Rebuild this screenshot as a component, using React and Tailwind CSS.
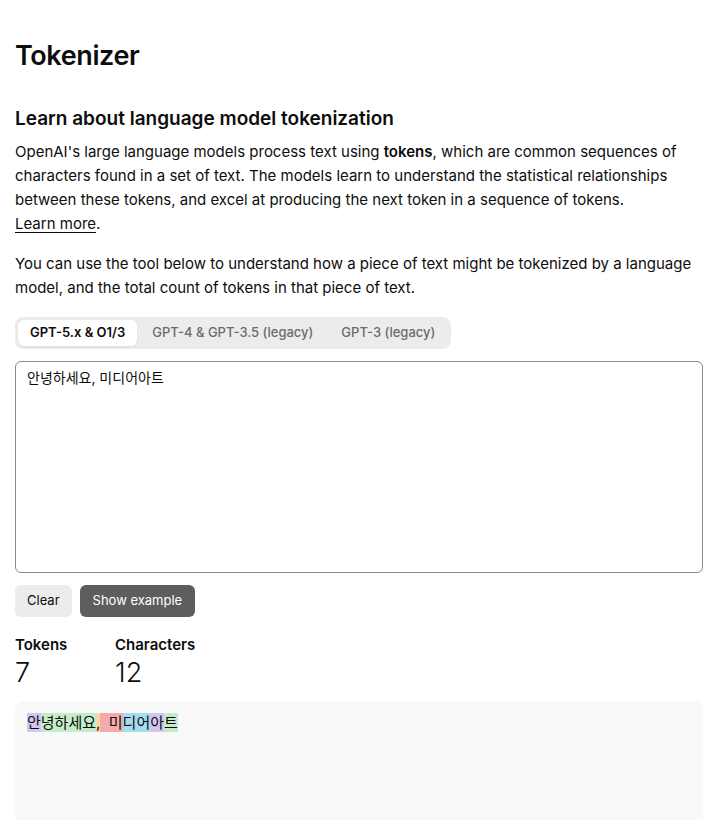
const tokens = [
  { text: '안', color: 'bg-[#d2c6f0]' },
  { text: '녕하세요', color: 'bg-[#c4ecc8]' },
  { text: ',', color: 'bg-[#f6d9a8]' },
  { text: ' \u00a0미', color: 'bg-[#f4abab]' },
  { text: '디어', color: 'bg-[#a4dcf2]' },
  { text: '아', color: 'bg-[#d2c6f0]' },
  { text: '트', color: 'bg-[#c4ecc8]' },
]

export default function App() {
  return (
    <div className="min-h-screen bg-white text-[#0d0d0d] font-['Inter','Noto_Sans_CJK_KR',sans-serif] pl-[15px] pr-[13px] pt-[36px] overflow-hidden">
      <h1 className="text-[27px] leading-[40px] font-semibold tracking-[-0.4px]">Tokenizer</h1>

      <h2 className="mt-[29px] text-[19px] leading-[28px] font-semibold">Learn about language model tokenization</h2>

      <p className="mt-[7px] text-[15px] leading-[24px]">
        OpenAI's large language models process text using <b className="font-semibold">tokens</b>, which are common sequences of characters found in a set of text. The models learn to understand the statistical relationships between these tokens, and excel at producing the next token in a sequence of tokens.
        <br />
        <a href="#" className="underline underline-offset-[3px] decoration-1">Learn more</a>.
      </p>

      <p className="mt-[16px] text-[15px] leading-[24px]">
        You can use the tool below to understand how a piece of text might be tokenized by a language model, and the total count of tokens in that piece of text.
      </p>

      {/* Model tabs */}
      <div className="mt-[17px] flex">
        <div className="flex items-center gap-[2px] rounded-lg bg-[#ececec] p-[3px] text-[13px] font-medium">
          <button className="rounded-md bg-white px-[12px] h-[26px] text-[#0d0d0d] font-semibold shadow-[0_1px_2px_rgba(0,0,0,0.08)]">GPT-5.x &amp; O1/3</button>
          <button className="rounded-md px-[13px] h-[26px] text-[#6b6b6b]">GPT-4 &amp; GPT-3.5 (legacy)</button>
          <button className="rounded-md px-[13px] h-[26px] text-[#6b6b6b]">GPT-3 (legacy)</button>
        </div>
      </div>

      <textarea
        defaultValue="안녕하세요, 미디어아트"
        className="mt-[12px] block w-full h-[212px] resize-none rounded-[6px] border border-[#8a8a8a] px-[11px] py-[6px] text-[14px] leading-[20px] text-[#0d0d0d] outline-none"
      />

      <div className="mt-[12px] flex gap-[8px] text-[13px]">
        <button className="h-[32px] rounded-md bg-[#ececec] px-[12px] text-[#0d0d0d]">Clear</button>
        <button className="h-[32px] rounded-md bg-[#5d5d5d] px-[13px] text-white">Show example</button>
      </div>

      <div className="mt-[18px] flex gap-[48px]">
        <div className="w-[52px]">
          <div className="text-[15px] leading-[20px] font-semibold">Tokens</div>
          <div className="text-[27px] leading-[36px] font-light">7</div>
        </div>
        <div>
          <div className="text-[15px] leading-[20px] font-semibold">Characters</div>
          <div className="text-[27px] leading-[36px] font-light">12</div>
        </div>
      </div>

      <div className="mt-[10px] h-[160px] rounded-lg bg-[#f9f9f9] px-[12px] py-[12px] text-[15px] leading-[20px]">
        {tokens.map((t, i) => (
          <span key={i} className={t.color + ' whitespace-pre'}>{t.text}</span>
        ))}
      </div>
    </div>
  )
}
